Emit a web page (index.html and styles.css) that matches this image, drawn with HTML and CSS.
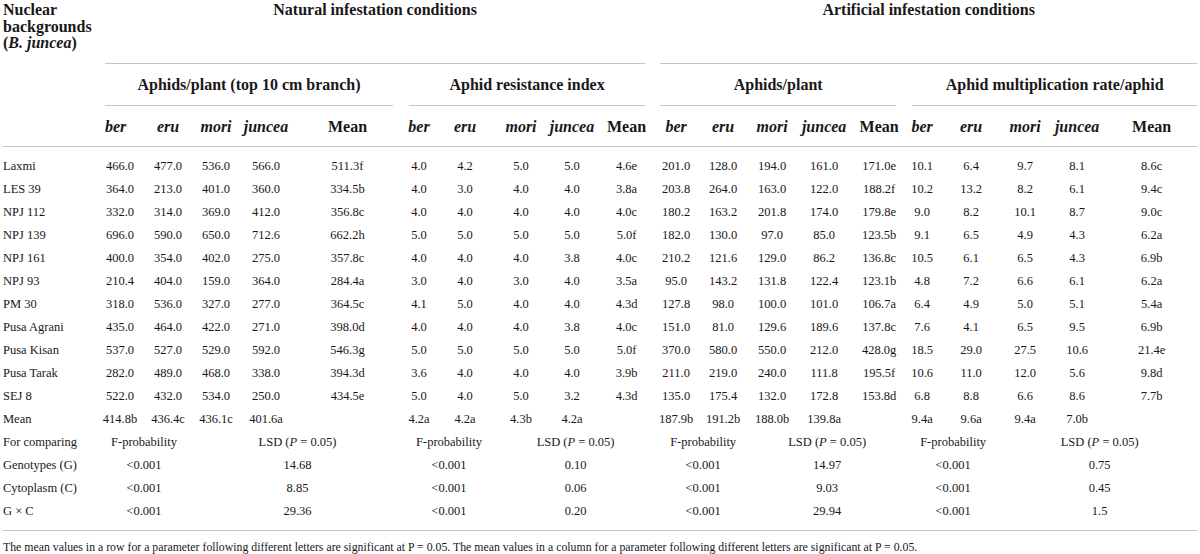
FILE: index.html
```html
<!DOCTYPE html>
<html lang="en">

<head>
  <meta charset="UTF-8" />
  <meta name="viewport" content="width=device-width, initial-scale=1.0" />
  <title>Aphid infestation table</title>
  <link rel="stylesheet" href="styles.css">
</head>

<body>
  <table class="aphid-table">
    <colgroup>
      <col class="c-label">
      <!-- natural: aphids/plant -->
      <col style="width:48px"><col style="width:48px"><col style="width:48px"><col style="width:52px"><col style="width:111px">
      <!-- natural: resistance index -->
      <col style="width:32px"><col style="width:60px"><col style="width:52px"><col style="width:50px"><col style="width:59px">
      <!-- artificial: aphids/plant -->
      <col style="width:40px"><col style="width:54px"><col style="width:44px"><col style="width:60px"><col style="width:50px">
      <!-- artificial: multiplication rate -->
      <col style="width:36px"><col style="width:62px"><col style="width:46px"><col style="width:58px"><col style="width:91px">
    </colgroup>
    <thead>
      <tr>
        <th rowspan="3" class="label-head">Nuclear<br>backgrounds<br>(<i>B. juncea</i>)</th>
        <th colspan="10" class="group"><div class="rule title r-nat">Natural infestation conditions</div></th>
        <th colspan="10" class="group"><div class="rule title r-art">Artificial infestation conditions</div></th>
      </tr>
      <tr>
        <th colspan="5" class="group"><div class="rule sub r-g1">Aphids/plant (top 10 cm branch)</div></th>
        <th colspan="5" class="group"><div class="rule sub r-g2">Aphid resistance index</div></th>
        <th colspan="5" class="group"><div class="rule sub r-g3">Aphids/plant</div></th>
        <th colspan="5" class="group"><div class="rule sub r-g4">Aphid multiplication rate/aphid</div></th>
      </tr>
      <tr class="col-names">
        <th class="first-ber"><i>ber</i></th><th><i>eru</i></th><th><i>mori</i></th><th><i>juncea</i></th><th>Mean</th>
        <th><i>ber</i></th><th><i>eru</i></th><th><i>mori</i></th><th><i>juncea</i></th><th>Mean</th>
        <th><i>ber</i></th><th><i>eru</i></th><th><i>mori</i></th><th><i>juncea</i></th><th>Mean</th>
        <th><i>ber</i></th><th><i>eru</i></th><th><i>mori</i></th><th><i>juncea</i></th><th>Mean</th>
      </tr>
    </thead>
    <tbody id="rows"></tbody>
  </table>

  <p class="footnote">The mean values in a row for a parameter following different letters are significant at P = 0.05. The mean values in a column for a parameter following different letters are significant at P = 0.05.</p>

  <script>
    const data = [
      ['Laxmi', '466.0 477.0 536.0 566.0 511.3f', '4.0 4.2 5.0 5.0 4.6e', '201.0 128.0 194.0 161.0 171.0e', '10.1 6.4 9.7 8.1 8.6c'],
      ['LES 39', '364.0 213.0 401.0 360.0 334.5b', '4.0 3.0 4.0 4.0 3.8a', '203.8 264.0 163.0 122.0 188.2f', '10.2 13.2 8.2 6.1 9.4c'],
      ['NPJ 112', '332.0 314.0 369.0 412.0 356.8c', '4.0 4.0 4.0 4.0 4.0c', '180.2 163.2 201.8 174.0 179.8e', '9.0 8.2 10.1 8.7 9.0c'],
      ['NPJ 139', '696.0 590.0 650.0 712.6 662.2h', '5.0 5.0 5.0 5.0 5.0f', '182.0 130.0 97.0 85.0 123.5b', '9.1 6.5 4.9 4.3 6.2a'],
      ['NPJ 161', '400.0 354.0 402.0 275.0 357.8c', '4.0 4.0 4.0 3.8 4.0c', '210.2 121.6 129.0 86.2 136.8c', '10.5 6.1 6.5 4.3 6.9b'],
      ['NPJ 93', '210.4 404.0 159.0 364.0 284.4a', '3.0 4.0 3.0 4.0 3.5a', '95.0 143.2 131.8 122.4 123.1b', '4.8 7.2 6.6 6.1 6.2a'],
      ['PM 30', '318.0 536.0 327.0 277.0 364.5c', '4.1 5.0 4.0 4.0 4.3d', '127.8 98.0 100.0 101.0 106.7a', '6.4 4.9 5.0 5.1 5.4a'],
      ['Pusa Agrani', '435.0 464.0 422.0 271.0 398.0d', '4.0 4.0 4.0 3.8 4.0c', '151.0 81.0 129.6 189.6 137.8c', '7.6 4.1 6.5 9.5 6.9b'],
      ['Pusa Kisan', '537.0 527.0 529.0 592.0 546.3g', '5.0 5.0 5.0 5.0 5.0f', '370.0 580.0 550.0 212.0 428.0g', '18.5 29.0 27.5 10.6 21.4e'],
      ['Pusa Tarak', '282.0 489.0 468.0 338.0 394.3d', '3.6 4.0 4.0 4.0 3.9b', '211.0 219.0 240.0 111.8 195.5f', '10.6 11.0 12.0 5.6 9.8d'],
      ['SEJ 8', '522.0 432.0 534.0 250.0 434.5e', '5.0 4.0 5.0 3.2 4.3d', '135.0 175.4 132.0 172.8 153.8d', '6.8 8.8 6.6 8.6 7.7b'],
      ['Mean', '414.8b 436.4c 436.1c 401.6a -', '4.2a 4.2a 4.3b 4.2a -', '187.9b 191.2b 188.0b 139.8a -', '9.4a 9.6a 9.4a 7.0b -']
    ];

    const stats = [
      ['Genotypes (G)', ['14.68', '0.10', '14.97', '0.75']],
      ['Cytoplasm (C)', ['8.85', '0.06', '9.03', '0.45']],
      ['G × C', ['29.36', '0.20', '29.94', '1.5']]
    ];

    const tbody = document.getElementById('rows');

    function addRow(html) {
      const tr = document.createElement('tr');
      tr.innerHTML = html;
      tbody.appendChild(tr);
      return tr;
    }

    data.forEach(row => {
      let html = `<td class="label">${row[0]}</td>`;
      for (let g = 1; g <= 4; g++) {
        row[g].split(' ').forEach(v => {
          html += `<td>${v === '-' ? '' : v}</td>`;
        });
      }
      addRow(html);
    });

    // 比較列
    let head = '<td class="label">For comparing</td>';
    for (let g = 0; g < 4; g++) {
      head += '<td colspan="2">F-probability</td><td colspan="3">LSD (<i>P</i> = 0.05)</td>';
    }
    addRow(head);

    stats.forEach(s => {
      let html = `<td class="label">${s[0]}</td>`;
      s[1].forEach(lsd => {
        html += `<td colspan="2">&lt;0.001</td><td colspan="3">${lsd}</td>`;
      });
      addRow(html);
    });

    tbody.firstElementChild.classList.add('first');
    tbody.lastElementChild.classList.add('last');
  </script>
</body>

</html>
```

FILE: styles.css
```css
body {
  margin: 0;
  padding: 0;
  background: #fff;
  color: #1a1718;
  font-family: "Liberation Serif", "Times New Roman", serif;
}

.aphid-table {
  width: 1194px;
  margin: 0 3px;
  border-collapse: collapse;
  table-layout: fixed;
  font-size: 12.5px;
}

.c-label {
  width: 93px;
}

th {
  padding: 0;
  font-size: 16px;
  font-weight: bold;
  line-height: 20px;
  text-align: center;
}

.label-head {
  text-align: left;
  vertical-align: top;
  line-height: 16.5px;
  padding-top: 2px;
  border-bottom: 1px solid #c4c4c4;
}

.group {
  vertical-align: bottom;
}

.rule {
  border-bottom: 1px solid #c4c4c4;
}

.title {
  height: 63px;
  line-height: 20px;
}

.sub {
  padding: 11px 0 10px;
}

.r-nat { margin: 0 11px 0 9px; }
.r-art { margin: 0 0 0 4px; }
.r-g1 { margin: 0 10px 0 9px; }
.r-g2 { margin: 0 11px 0 6px; }
.r-g3 { margin: 0 8px 0 4px; }
.r-g4 { margin: 0 0 0 8px; }

.col-names th {
  padding: 11px 0 9px;
  border-bottom: 1px solid #c4c4c4;
}

.col-names .first-ber {
  text-align: left;
  padding-left: 9px;
}

td {
  padding: 0;
  height: 23px;
  line-height: 23px;
  text-align: center;
  white-space: nowrap;
}

td.label {
  text-align: left;
}

tr.first td {
  padding-top: 8px;
}

tr.last td {
  padding-bottom: 7px;
  border-bottom: 1px solid #c4c4c4;
}

.footnote {
  margin: 9px 3px 0;
  font-size: 11.8px;
  line-height: 14px;
}
```
